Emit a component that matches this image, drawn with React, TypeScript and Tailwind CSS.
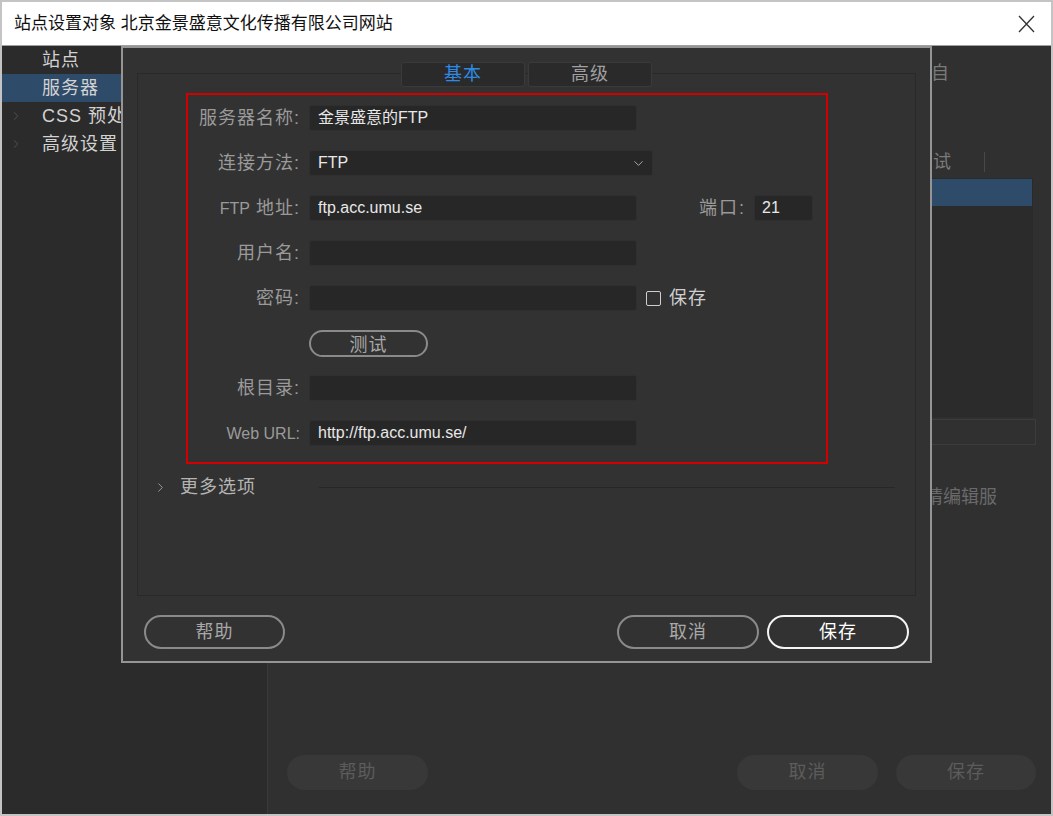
import type { ReactNode } from "react";
import { ChevronDown, ChevronRight } from "lucide-react";

const FONT = "font-['Liberation_Sans','Noto_Sans_CJK_SC',sans-serif]";

function Row({ label, children }: { label: ReactNode; children: ReactNode }) {
  return (
    <div className="flex h-[26px] items-center">
      <div className="w-[112px] text-right text-[18px] leading-none tracking-[1px] text-[#9a9a9a]">
        {label}
      </div>
      <div className="ml-[9px] flex items-center">{children}</div>
    </div>
  );
}

function Field({ value = "", width = "w-[328px]" }: { value?: string; width?: string }) {
  return (
    <div
      className={`${width} flex h-[26px] items-center rounded-[3px] border border-[#2f2f2f] bg-[#272727] pl-[8px] text-[16px] text-[#e8e8e8]`}
    >
      {value}
    </div>
  );
}

function PillButton({ label, primary = false, width = "w-[141px]" }: { label: string; primary?: boolean; width?: string }) {
  return (
    <button
      className={
        primary
          ? `${width} h-[34px] rounded-full border-[2.5px] border-[#f4f4f4] text-[18px] tracking-[1px] text-white`
          : `${width} h-[34px] rounded-full border-2 border-[#8a8a8a] text-[18px] tracking-[1px] text-[#a8a8a8]`
      }
    >
      {label}
    </button>
  );
}

function SiteDialog() {
  return (
    <div className="absolute left-[119px] top-[44px] flex h-[617px] w-[811px] flex-col border-2 border-[#959595] bg-[#323232] px-[14px] pb-[12px] pt-[14px]">
      {/* tabs */}
      <div className="relative z-10 flex justify-center gap-[3px]">
        <div className="flex h-[25px] w-[124px] items-center justify-center rounded-[3px] border border-[#3a3a3a] bg-[#2a2a2a] text-[18px] tracking-[1px] text-[#2e8ae6]">
          基本
        </div>
        <div className="flex h-[25px] w-[124px] items-center justify-center rounded-[3px] border border-[#3a3a3a] bg-[#2a2a2a] text-[18px] tracking-[1px] text-[#a0a0a0]">
          高级
        </div>
      </div>

      <div className="-mt-[14px] flex h-[523px] flex-col border border-[#292929] pt-[19px]">
        <div className="ml-[48px] flex h-[371px] w-[642px] flex-col gap-[19px] border-[2.5px] border-[#d40000] pt-[10px]">
          <Row label="服务器名称:">
            <Field value="金景盛意的FTP" />
          </Row>
          <Row label="连接方法:">
            <div className="flex h-[26px] w-[344px] items-center justify-between rounded-[3px] border border-[#2f2f2f] bg-[#272727] pl-[8px] pr-[6px] text-[16px] text-[#e8e8e8]">
              <span>FTP</span>
              <ChevronDown size={15} strokeWidth={1.5} color="#b0b0b0" />
            </div>
          </Row>
          <Row
            label={
              <>
                <span className="text-[16px] tracking-normal">FTP</span> 地址:
              </>
            }
          >
            <Field value="ftp.acc.umu.se" />
            <span className="ml-[62px] text-[18px] tracking-[2px] text-[#9a9a9a]">端口:</span>
            <div className="ml-[8px] flex h-[26px] w-[59px] items-center rounded-[3px] border border-[#2f2f2f] bg-[#272727] pl-[7px] text-[16px] text-[#e8e8e8]">
              21
            </div>
          </Row>
          <Row label="用户名:">
            <Field />
          </Row>
          <Row label="密码:">
            <Field />
            <div className="ml-[9px] h-[15px] w-[15px] rounded-[2px] border-[1.5px] border-[#cfcfcf]" />
            <span className="ml-[8px] text-[18px] tracking-[1px] text-[#cfcfcf]">保存</span>
          </Row>
          <div className="flex h-[26px] items-center pl-[121px]">
            <button className="h-[27px] w-[119px] rounded-full border-2 border-[#8a8a8a] text-[18px] tracking-[1px] text-[#a8a8a8]">
              测试
            </button>
          </div>
          <Row label="根目录:">
            <Field />
          </Row>
          <Row label={<span className="text-[16px] tracking-normal">Web URL:</span>}>
            <Field value="http://ftp.acc.umu.se/" />
          </Row>
        </div>

        <div className="mt-[11px] flex h-[24px] items-center pl-[15px] pr-[20px]">
          <ChevronRight size={15} strokeWidth={1.5} color="#a0a0a0" />
          <span className="ml-[12px] text-[18px] tracking-[1px] text-[#b4b4b4]">更多选项</span>
          <div className="ml-[63px] h-px flex-1 bg-[#272727]" />
        </div>
      </div>

      <div className="mt-[19px] flex h-[34px] items-center px-[7px]">
        <PillButton label="帮助" />
        <div className="ml-auto">
          <PillButton label="取消" width="w-[142px]" />
        </div>
        <div className="ml-[8px]">
          <PillButton label="保存" primary width="w-[142px]" />
        </div>
      </div>
    </div>
  );
}

export default function App() {
  const sideItems = [
    { label: "站点", arrow: false, active: false },
    { label: "服务器", arrow: false, active: true },
    { label: "CSS 预处理器", arrow: true, active: false },
    { label: "高级设置", arrow: true, active: false },
  ];

  return (
    <div className={`relative h-[816px] w-[1053px] overflow-hidden border-2 border-[#c4c4c4] bg-white ${FONT}`}>
      <div className="flex h-full flex-col">
        <header className="flex h-[44px] shrink-0 items-center justify-between border-b border-[#a0a0a0] bg-white pl-[12px] pr-[16px]">
          <span className="text-[17px] text-[#111]">站点设置对象 北京金景盛意文化传播有限公司网站</span>
          <svg width="17" height="18" viewBox="0 0 17 18" fill="none" stroke="#333" strokeWidth="1.3">
            <path d="M1 1L16 17M16 1L1 17" />
          </svg>
        </header>

        <div className="flex min-h-0 flex-1">
          <aside className="w-[266px] shrink-0 border-r border-[#3a3a3a] bg-[#2b2b2b]">
            {sideItems.map((item) => (
              <div
                key={item.label}
                className={`flex h-[28px] items-center whitespace-nowrap pl-[7px] text-[18px] tracking-[1px] text-[#d2d2d2] ${
                  item.active ? "bg-[#2e4b6a]" : ""
                }`}
              >
                <div className="w-[33px]">
                  {item.arrow && <ChevronRight size={14} strokeWidth={1.5} color="#555" />}
                </div>
                {item.label}
              </div>
            ))}
          </aside>

          <main className="flex min-w-0 flex-1 flex-col bg-[#303030] pl-[20px] pr-[18px] text-[18px] tracking-[1px]">
            <div className="mt-[16px] flex h-[22px] items-center justify-end overflow-hidden whitespace-nowrap pr-[83px] text-[#7a7a7a]">
              的设置来自
            </div>

            <div className="mt-[64px] flex h-[28px] items-center text-[#7a7a7a]">
              <div className="flex flex-1 justify-end pr-[32px]">测试</div>
              <div className="h-[20px] w-px bg-[#484848]" />
              <div className="w-[48px]" />
            </div>

            <div className="mt-[2px] border border-[#2a2a2a]">
              <div className="h-[27px] bg-[#2e4b6a]" />
              <div className="h-[210px] bg-[#2b2b2b]" />
            </div>
            <div className="-mr-[3px] mt-[2px] h-[26px] border border-[#3c3c3c]" />

            <div className="mt-[40px] flex h-[24px] items-center justify-end overflow-hidden whitespace-nowrap pr-[36px] tracking-normal text-[#6a6a6a]">
              服务器，请编辑服
            </div>

            <div className="-ml-px -mr-[3px] mb-[24px] mt-auto flex h-[35px] items-center gap-[18px]">
              <div className="flex h-[35px] w-[141px] items-center justify-center rounded-full bg-[#383838] text-[#5c5c5c]">
                帮助
              </div>
              <div className="ml-auto flex h-[35px] w-[141px] items-center justify-center rounded-full bg-[#383838] text-[#5c5c5c]">
                取消
              </div>
              <div className="flex h-[35px] w-[140px] items-center justify-center rounded-full bg-[#383838] text-[#5c5c5c]">
                保存
              </div>
            </div>
          </main>
        </div>
      </div>

      <SiteDialog />
    </div>
  );
}
